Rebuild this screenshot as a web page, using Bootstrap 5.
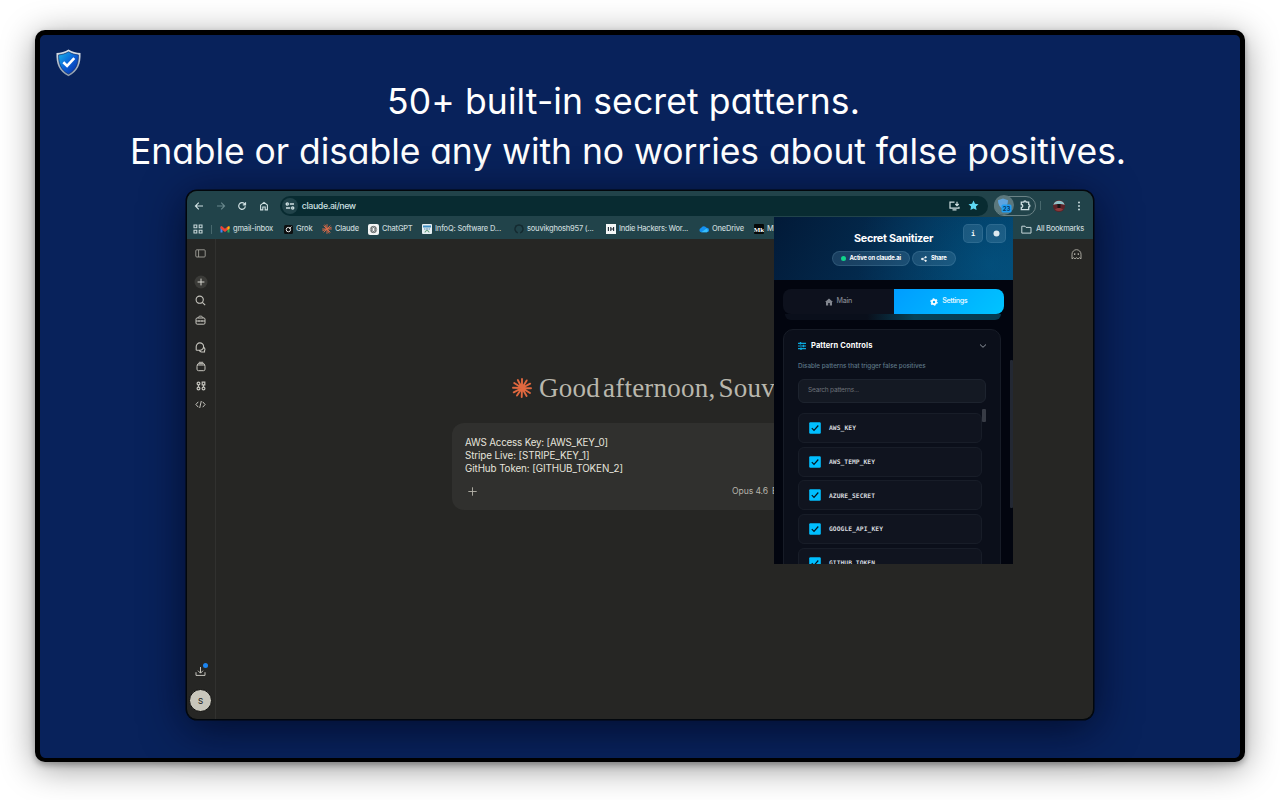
<!DOCTYPE html>
<html lang="en">
  <head>
    <meta charset="UTF-8" />
    <meta name="viewport" content="width=device-width, initial-scale=1.0" />
    <title>Secret Sanitizer</title>
    <link
      href="https://cdn.jsdelivr.net/npm/bootstrap@5.3.3/dist/css/bootstrap.min.css"
      rel="stylesheet"
    />
    <style>
      body {
        background: #fff;
        font-family: Inter, "Liberation Sans", sans-serif;
        width: 1280px;
        height: 800px;
        overflow: hidden;
        padding: 30px 35px;
      }
      svg {
        display: block;
        flex: none;
      }
      .fit {
        display: inline-block;
        white-space: nowrap;
        flex: none;
      }

      /* Slide */
      .slide {
        width: 1210px;
        height: 732px;
        border: 4.500px solid #000;
        border-width: 5px 5px 4px;
        border-radius: 10px;
        background: #08225b;
        padding-top: 14px;
        box-shadow: 0 6px 34px rgba(0, 0, 0, 0.4), 0 3px 6px rgba(0, 0, 0, 0.3);
      }
      .logo {
        margin-left: 15px;
      }
      .headline {
        font-size: 35.5px;
        line-height: 49.5px;
        font-weight: 400;
        font-feature-settings: "cv11";
        color: #fff;
        margin: 0 0 14px;
      }
      .headline .first {
        padding-right: 33px;
      }
      .headline .second {
        padding-right: 24px;
      }

      /* Browser window */
      .browser {
        width: 908px;
        height: 530px;
        margin-left: 146px;
        border: 1px solid #02070c;
        border-radius: 11px;
        background: #262624;
        box-shadow: 0 0 0 0.5px #02070c, 0 8px 44px rgba(2, 6, 28, 0.75);
      }
      .browser-inner {
        height: 100%;
        border-radius: 10px;
        overflow: hidden;
      }
      .toolbar {
        height: 26px;
        background: #21434a;
        color: #cfe0e2;
        padding: 3px 10px 0 7px;
      }
      .nav-icons {
        gap: 11.6px;
      }
      .address {
        width: 708px;
        height: 20px;
        border-radius: 10px;
        background: #082b31;
        margin-left: 11px;
        padding: 0 9px 0 2px;
        font-size: 8.8px;
        font-weight: 500;
      }
      .site-btn {
        width: 16px;
        height: 16px;
        border-radius: 50%;
        background: #21434a;
        margin-right: 4px;
      }
      .ext-pill {
        width: 42px;
        height: 20px;
        border: 1px solid #6b8387;
        border-radius: 10px;
        margin-left: 6px;
        padding-right: 4px;
      }
      .ext-on {
        width: 20px;
        height: 20px;
        margin: -1px 0 0 -1px;
        border-radius: 50%;
        background: #5c787d;
      }
      .vline {
        width: 1px;
        height: 9px;
        background: #48686d;
      }
      .bookmarks {
        height: 22px;
        background: #21434a;
        color: #c6d6d8;
        font-size: 7.5px;
        font-weight: 500;
        padding: 2px 9px 0 6px;
      }
      .bm-list {
        display: grid;
        grid-template-columns: 64px 38px 46px 54px 92px 92px 93px 55px 20px;
        margin-left: 8px;
      }
      .bm-list > div {
        display: flex;
        align-items: center;
        gap: 3px;
      }

      /* Page */
      .page {
        height: 480px;
      }
      .side {
        width: 29px;
        border-right: 1px solid #31312f;
        color: #c5c4bd;
        padding: 5px 0 7px;
      }
      .side .cell {
        width: 27px;
        height: 19px;
        display: flex;
        align-items: center;
        justify-content: center;
      }
      .side .space {
        height: 9px;
      }
      .avatar-s {
        width: 23px;
        height: 23px;
        border-radius: 50%;
        background: #c8c6bb;
        border: 1px solid #0e0e0d;
        color: #262624;
        font-size: 8px;
        font-weight: 500;
        margin-left: 2px;
      }
      .chat {
        padding: 132px 0 0 236px;
      }
      .greeting {
        font-family: "Liberation Serif", serif;
        font-size: 27px;
        line-height: 34px;
        word-spacing: -4px;
        color: #b9b7ad;
        padding-left: 60px;
        gap: 7px;
      }
      .composer {
        width: 404px;
        height: 87px;
        border-radius: 12px;
        background: #30302e;
        margin-top: 18px;
        padding: 12.5px 13px;
        font-size: 9.8px;
        line-height: 13px;
        color: #e6e4dd;
      }
      .composer-foot {
        font-size: 8.6px;
        color: #b5b3aa;
        margin-top: 10px;
        padding-left: 3px;
      }
      .model {
        margin-left: 255px;
      }
      .ghost {
        padding: 10px 11px;
        color: #b5b3aa;
      }

      /* Extension popup, opened over the page */
      .popup {
        top: 26px;
        left: 587px;
        width: 239px;
        height: 347px;
        overflow: hidden;
        background: #02050f;
        color: #fff;
      }
      .popup-head {
        height: 63px;
        background: radial-gradient(circle at 90% 75%, rgba(0, 110, 165, 0.35), transparent 60%),
          linear-gradient(120deg, #021a38 0%, #032c50 50%, #04426a 100%);
        padding-top: 14px;
      }
      .popup-title {
        font-size: 10.8px;
        line-height: 16px;
        font-weight: 700;
      }
      .chip {
        height: 15px;
        border: 1px solid rgba(150, 200, 225, 0.16);
        border-radius: 8px;
        background: rgba(110, 160, 190, 0.22);
        font-size: 5.9px;
        font-weight: 700;
      }
      .chip-live {
        padding: 0 8px;
        margin-right: 2px;
      }
      .live-dot {
        width: 5px;
        height: 5px;
        border-radius: 50%;
        background: #10d48a;
      }
      .head-btns {
        top: 7px;
        right: 7px;
        gap: 3px;
      }
      .head-btn {
        width: 20px;
        height: 19px;
        border: 1px solid rgba(150, 200, 225, 0.14);
        border-radius: 5px;
        background: rgba(110, 160, 190, 0.24);
        font: 700 7px "DejaVu Sans Mono", monospace;
      }
      .tabs {
        width: 221px;
        height: 25px;
        margin: 9px 0 0 9px;
        font-size: 7.1px;
      }
      .tab-main {
        background: #0d111d;
        border-radius: 8px 0 0 8px;
        color: #82868f;
        font-weight: 500;
      }
      .tab-set {
        background: linear-gradient(135deg, #009dff, #00c4ff);
        border-radius: 0 8px 8px 0;
        color: #d9f3ff;
        font-weight: 600;
      }
      .tab-under {
        width: 216px;
        height: 6px;
        margin: 0 0 0 11px;
        border-radius: 0 0 8px 8px;
        background: linear-gradient(90deg, #0a0f1b 38%, #064257 60%, #063a50);
      }
      .panel {
        width: 218px;
        height: 260px;
        margin: 9px 0 0 9px;
        border: 1px solid #171c27;
        border-radius: 10px;
        background: #0b0f1a;
        padding: 9px 0 0 14px;
      }
      .panel-title {
        font-size: 7.5px;
        line-height: 13px;
        font-weight: 700;
        padding-right: 13px;
      }
      .panel-name {
        margin-left: 5px;
      }
      .hint {
        font-size: 6.3px;
        line-height: 10px;
        font-weight: 500;
        color: #5d7686;
        margin-top: 9px;
      }
      .search {
        width: 188px;
        height: 24px;
        border: 1px solid #1d232e;
        border-radius: 6px;
        background: #141923;
        color: #6d7178;
        font-size: 6.6px;
        padding-left: 9px;
        margin-top: 7.5px;
      }
      .rows {
        width: 184px;
        margin-top: 10.5px;
      }
      .rule {
        height: 30px;
        margin-bottom: 3.7px;
        border: 1px solid #181d28;
        border-radius: 6px;
        background: #10141f;
        padding-left: 10px;
        gap: 8px;
        font-family: "DejaVu Sans Mono", monospace;
        font-size: 6.3px;
        font-weight: 700;
        color: #d5d8de;
      }
      .thumb-in {
        top: 192px;
        left: 208px;
        width: 4px;
        height: 13px;
        border-radius: 1px;
        background: #373b45;
      }
      .thumb-out {
        top: 143px;
        right: 0;
        width: 3px;
        height: 148px;
        border-radius: 1px;
        background: #232833;
      }
    </style>
  </head>
  <body>
    <div class="slide">
      <svg class="logo" width="27" height="28" viewBox="0 0 27 28">
        <defs>
          <linearGradient id="shieldFill" x1="0" y1="0" x2="1" y2="1">
            <stop offset="0" stop-color="#19b5ea" />
            <stop offset=".5" stop-color="#0b62d8" />
            <stop offset="1" stop-color="#06259a" />
          </linearGradient>
          <linearGradient id="shieldRim" x1="0" y1="0" x2="0" y2="1">
            <stop offset="0" stop-color="#dfe5ec" />
            <stop offset="1" stop-color="#8a98a8" />
          </linearGradient>
        </defs>
        <path d="M13.500 .5C17 2.900 21 3.700 25.500 4 26 14.500 23.200 22.500 13.500 27.200 3.800 22.500 1 14.500 1.500 4 6 3.700 10 2.900 13.500 .5z" fill="url(#shieldRim)" />
        <path d="M13.500 2.800C17 4.900 20 5.600 23.400 5.900 23.700 14 21.300 21.100 13.500 25 5.700 21.100 3.300 14 3.600 5.900 7 5.600 10 4.900 13.500 2.800z" fill="url(#shieldFill)" stroke="#0a2a6a" stroke-width=".7" />
        <path d="M8.300 13.300l3.800 3.700 7.200-7.800" fill="none" stroke="#fff" stroke-width="2.600" />
      </svg>
      <h1 class="headline text-center">
        <div class="first"><span class="fit" data-w="473">50+ built-in secret patterns.</span></div>
        <div class="second"><span class="fit" data-w="996">Enable or disable any with no worries about false positives.</span></div>
      </h1>

      <div class="browser position-relative">
        <div class="browser-inner">
          <div class="toolbar d-flex align-items-center">
            <div class="nav-icons d-flex">
              <svg width="10" height="10" viewBox="0 0 10 10" fill="none" stroke="currentColor" stroke-width="1.100"><path d="M9 5H1.500M4.800 1.600L1.400 5l3.400 3.400" /></svg>
              <svg width="10" height="10" viewBox="0 0 10 10" fill="none" stroke="#68878c" stroke-width="1.100"><path d="M1 5h7.500M5.200 1.600L8.600 5 5.200 8.400" /></svg>
              <svg width="10" height="10" viewBox="0 0 10 10" fill="none" stroke="currentColor" stroke-width="1.200"><path d="M8.300 5.200A3.300 3.300 0 1 1 7.400 2.700L8.300 3.700M8.500 1.200v2.700H5.800" /></svg>
              <svg width="10" height="10" viewBox="0 0 10 10" fill="none" stroke="currentColor" stroke-width="1.100"><path d="M1.600 4.100L5 1.400l3.400 2.700v4.800H6.200V6H3.800v2.900H1.600z" /></svg>
            </div>
            <div class="address d-flex align-items-center">
              <div class="site-btn d-flex align-items-center justify-content-center">
                <svg width="10" height="10" viewBox="0 0 10 10" fill="none" stroke="currentColor" stroke-width="1.300"><circle cx="2.300" cy="3" r="1.100" /><path d="M4.800 3H9M1 7h4.200" /><circle cx="7.700" cy="7" r="1.100" /></svg>
              </div>
              <span class="fit" data-w="54">claude.ai/new</span>
              <svg class="ms-auto" width="11" height="10" viewBox="0 0 11 10" fill="none" stroke="currentColor" stroke-width="1.200"><path d="M5.500 1.200H1v6h9V5.800M3.500 8.800h4M8 .8v3.600M6.300 3L8 4.700 9.700 3" /></svg>
              <svg class="ms-2" width="11" height="11" viewBox="0 0 11 11" fill="#5fd8f4"><path d="M5.500.6l1.500 3.200 3.500.4-2.600 2.400.7 3.500-3.100-1.700-3.100 1.700.7-3.500L.5 4.200 4 3.800z" /></svg>
            </div>
            <div class="ext-pill d-flex align-items-center justify-content-between">
              <div class="ext-on d-flex align-items-center justify-content-center">
                <svg width="16" height="16" viewBox="0 0 16 16">
                  <path d="M7 1.500l5 1.800c0 4-1.500 7-5 8.700-3.500-1.700-5-4.700-5-8.700z" fill="#5ea4df" />
                  <rect x="5.500" y="7.500" width="10" height="8" rx="1.500" fill="#1f9df2" />
                  <text x="10.500" y="13.700" font-size="6" font-weight="700" text-anchor="middle" fill="#063a66">23</text>
                </svg>
              </div>
              <svg width="11" height="11" viewBox="0 0 11 11" fill="none" stroke="currentColor" stroke-width="1.300"><path d="M1.300 2.200h2.500a1.200 1.200 0 0 1 2.400 0h2.500v2.400a1.200 1.200 0 0 1 0 2.400v2.700H1.300V7.500a1.400 1.400 0 0 0 0-3z" /></svg>
            </div>
            <div class="vline ms-1 me-2"></div>
            <svg class="ms-1" width="12" height="12" viewBox="0 0 12 12"><circle cx="6" cy="6" r="6" fill="#5d2328" /><path d="M.3 5A6 6 0 0 1 11.700 5C9 3.800 3 3.800.3 5z" fill="#8fc0c6" /><path d="M4.500 4h3v4h-3z" fill="#1b1416" /><path d="M2 9.500c2-2 6-2 8 0A6 6 0 0 1 2 9.500z" fill="#8e3a3c" /></svg>
            <svg class="ms-auto me-0" width="8" height="10" viewBox="0 0 8 10" fill="currentColor"><circle cx="4" cy="1.500" r=".95" /><circle cx="4" cy="5" r=".95" /><circle cx="4" cy="8.500" r=".95" /></svg>
          </div>

          <div class="bookmarks d-flex align-items-center">
            <svg width="10" height="10" viewBox="0 0 10 10" fill="none" stroke="currentColor" stroke-width="1.100"><path d="M1 1h2.800v2.800H1zM6.200 1H9v2.800H6.200zM1 6.200h2.800V9H1zM6.200 6.200H9V9H6.200z" /></svg>
            <div class="vline ms-2"></div>
            <div class="bm-list">
              <div>
                <svg width="10" height="9" viewBox="0 0 10 9"><path d="M.5 1.500v6h2V4z" fill="#4285f4" /><path d="M9.500 1.500v6h-2V4z" fill="#34a853" /><path d="M.5 3.500v-2l1.200-.4L5 3.700l3.300-2.600 1.200.4v2L5 7z" fill="#ea4335" /><path d="M7.500 2v3l2-1.600V1.200z" fill="#fbbc04" /></svg>
                <span class="fit" data-w="40">gmail-inbox</span>
              </div>
              <div>
                <svg width="9" height="9" viewBox="0 0 9 9"><rect width="9" height="9" rx="1.500" fill="#0c0f10" /><circle cx="4.400" cy="4.600" r="2.200" fill="none" stroke="#e8e8e8" stroke-width="1" /><path d="M5.300 3.700L7.500 1.500" stroke="#e8e8e8" stroke-width=".9" /></svg>
                <span class="fit" data-w="16.5">Grok</span>
              </div>
              <div>
                <svg width="10" height="10" viewBox="-5 -5 10 10" stroke="#d96a48" stroke-width=".95"><path d="M0-4.800V4.800M-4.800 0H4.800M-3.400-3.400L3.400 3.400M3.400-3.400L-3.400 3.400M-2.200-4.400L2.200 4.400M4.600-1.800L-4.600 1.800" /></svg>
                <span class="fit" data-w="24">Claude</span>
              </div>
              <div>
                <svg width="11" height="11" viewBox="0 0 11 11"><rect width="11" height="11" rx="2" fill="#f3f5f5" /><g fill="none" stroke="#5b6263" stroke-width=".7"><circle cx="5.500" cy="5.500" r="3.200" /><ellipse cx="5.500" cy="5.500" rx="1.500" ry="3.200" transform="rotate(30 5.500 5.500)" /><ellipse cx="5.500" cy="5.500" rx="1.500" ry="3.200" transform="rotate(-30 5.500 5.500)" /></g></svg>
                <span class="fit" data-w="30.5">ChatGPT</span>
              </div>
              <div>
                <svg width="10" height="10" viewBox="0 0 10 10"><rect width="10" height="10" rx="1" fill="#e6eef2" /><path d="M1 1.500h8v2H1z" fill="#3f8fc4" /><path d="M3 8.500a2 2 0 1 1 4 0" fill="none" stroke="#5b9a76" /><path d="M5 4v2M2 5h1.500M6.500 5H8" stroke="#2b6f9f" stroke-width=".8" /></svg>
                <span class="fit" data-w="66">InfoQ: Software D...</span>
              </div>
              <div>
                <svg width="10" height="10" viewBox="0 0 10 10" fill="none" stroke="#142a30" stroke-width="1.400"><path d="M3.800 8.800A4 4 0 1 1 6.200 8.800M2 1.200v2M8 1.200v2" /></svg>
                <span class="fit" data-w="66.5">souvikghosh957 (...</span>
              </div>
              <div>
                <svg width="10" height="10" viewBox="0 0 10 10"><rect width="10" height="10" fill="#f4f6f6" /><path d="M2.400 3v4M4.800 3v4M7.600 3v4M4.800 5h2.800" stroke="#1f2b36" stroke-width="1.100" /></svg>
                <span class="fit" data-w="69">Indie Hackers: Wor...</span>
              </div>
              <div>
                <svg width="10" height="8" viewBox="0 0 10 8"><path d="M2.300 7.300a2.200 2.200 0 0 1-.2-4.300A3 3 0 0 1 7.500 2.700a2.300 2.300 0 0 1 .4 4.600z" fill="#1490f0" /><path d="M2.300 7.300L7.500 3.600a2.100 2.100 0 0 1 .4 3.700z" fill="#38c0fb" /></svg>
                <span class="fit" data-w="32">OneDrive</span>
              </div>
              <div>
                <svg width="10" height="10" viewBox="0 0 10 10"><rect width="10" height="10" rx="1" fill="#050808" /><text x="5" y="7.500" font-family="Liberation Serif" font-size="7" font-weight="700" text-anchor="middle" fill="#fff">Mk</text></svg>
                <span>M</span>
              </div>
            </div>
            <svg class="ms-auto me-1" width="11" height="9" viewBox="0 0 11 9" fill="none" stroke="currentColor"><path d="M.8 1.200h3.200l1 1.200h5v5.700H.8z" stroke-linejoin="round" /></svg>
            <span class="fit" data-w="48">All Bookmarks</span>
          </div>

          <div class="page d-flex">
            <div class="side d-flex flex-column">
              <div class="cell"><svg width="11" height="9" viewBox="0 0 11 9" fill="none" stroke="#a3a29b" stroke-width=".9"><rect x=".8" y=".8" width="9.400" height="7.200" rx="1" /><path d="M3.600 1v7" /></svg></div>
              <div class="space"></div>
              <div class="cell"><svg width="14" height="14" viewBox="0 0 14 14"><circle cx="7" cy="7" r="6.500" fill="#3b3b38" /><path d="M7 3.600v6.800M3.600 7h6.800" stroke="#d6d5ce" /></svg></div>
              <div class="cell"><svg width="11" height="11" viewBox="0 0 11 11" fill="none" stroke="currentColor" stroke-width="1.100"><circle cx="4.700" cy="4.700" r="3.600" /><path d="M7.300 7.300L10.200 10.200" /></svg></div>
              <div class="cell"><svg width="11" height="10" viewBox="0 0 11 10" fill="none" stroke="currentColor"><rect x="1" y="3" width="9" height="6.200" rx="1.200" /><path d="M3 3c0-2.500 5-2.500 5 0M1 6h9M4 5.200v1.600M7 5.200v1.600" /></svg></div>
              <div class="space"></div>
              <div class="cell"><svg width="11" height="11" viewBox="0 0 11 11" fill="none" stroke="currentColor" stroke-width="1.100"><path d="M1.200 8.200V4.700a3.700 3.700 0 1 1 3.700 3.600H1.200M8.600 5.200c1.700 1 1.500 2.800.9 3.400v1.400H6.500c-1 0-1.800-.6-2.200-1.700" /></svg></div>
              <div class="cell"><svg width="10" height="11" viewBox="0 0 10 11" fill="none" stroke="currentColor"><rect x="1" y="4" width="8" height="5.700" rx="1.500" /><path d="M1 4.500L2 2.700h6l1 1.800M2.800 1.300h4.400" /></svg></div>
              <div class="cell"><svg width="10" height="10" viewBox="0 0 10 10" fill="none" stroke="currentColor" stroke-width="1.200"><circle cx="2.500" cy="2.500" r="1.400" /><path d="M6.200 1.200h2.600v2.600H6.200zM2.500 4v2M7.500 4v2" /><circle cx="2.500" cy="7.500" r="1.400" /><circle cx="7.500" cy="7.500" r="1.400" /></svg></div>
              <div class="cell"><svg width="11" height="9" viewBox="0 0 11 9" fill="none" stroke="currentColor"><path d="M3.300 1.800L.9 4.500l2.400 2.700M7.700 1.800l2.400 2.700-2.400 2.700M6.300 1L4.700 8" /></svg></div>
              <div class="cell mt-auto mb-2 pb-1"><svg width="15" height="14" viewBox="0 0 15 14" fill="none" stroke="currentColor"><path d="M7.500 4v6M5 7.700l2.500 2.500L10 7.700M3 9.200v3.200h9V9.200" /><circle cx="12.500" cy="2.600" r="2.500" fill="#1b84f0" stroke="none" /></svg></div>
              <div class="avatar-s d-flex align-items-center justify-content-center">S</div>
            </div>

            <div class="chat">
              <div class="greeting d-flex align-items-center">
                <svg width="20" height="20" viewBox="-10 -10 20 20" stroke="#e0683f" stroke-width="1.900" stroke-linecap="round"><path d="M0 0V-9M0 0L4.700-7.600M0 0L8.200-4.300M0 0L9 .3M0 0L8 5M0 0L4.600 8M0 0L-.3 9M0 0L-5 7.600M0 0L-8.300 4.300M0 0L-9-.3M0 0L-7.800-5M0 0L-4.200-8" /></svg>
                <span class="fit" data-w="236">Good afternoon, Souv</span>
              </div>
              <div class="composer">
                <div><span class="fit" data-w="143">AWS Access Key: [AWS_KEY_0]</span></div>
                <div><span class="fit" data-w="124.5">Stripe Live: [STRIPE_KEY_1]</span></div>
                <div><span class="fit" data-w="158">GitHub Token: [GITHUB_TOKEN_2]</span></div>
                <div class="composer-foot d-flex align-items-center">
                  <svg width="9" height="9" viewBox="0 0 9 9" stroke="currentColor" stroke-width=".9"><path d="M4.500.3v8.400M.3 4.500h8.400" /></svg>
                  <span class="fit model" data-w="36">Opus 4.6</span>
                  <span class="ms-1">Extended</span>
                </div>
              </div>
            </div>
            <div class="ghost ms-auto">
              <svg width="11" height="11" viewBox="0 0 11 11" fill="none" stroke="currentColor" stroke-width=".9"><path d="M1 9.800V5.200a4.500 4.500 0 0 1 9 0v4.600L8.500 8.700 7 9.800 5.500 8.700 4 9.800 2.500 8.700z" /><path d="M3.700 4.300v1.600M7.300 4.300v1.600" stroke-width="1.200" /></svg>
            </div>
          </div>
        </div>

        <div class="popup position-absolute">
          <div class="popup-head">
            <div class="popup-title text-center"><span class="fit" data-w="79">Secret Sanitizer</span></div>
            <div class="d-flex justify-content-center mt-1">
              <div class="chip chip-live d-flex align-items-center">
                <div class="live-dot me-1"></div>
                <span class="fit" data-w="51.5">Active on claude.ai</span>
              </div>
              <div class="chip d-flex align-items-center px-2">
                <svg class="me-1" width="6" height="6" viewBox="0 0 6 6" fill="#fff" stroke="#fff" stroke-width=".7"><circle cx="1.200" cy="3" r=".8" /><circle cx="4.700" cy="1.200" r=".7" /><circle cx="4.700" cy="4.800" r=".7" /><path d="M4.700 1.200L1.200 3l3.500 1.800" fill="none" /></svg>
                <span class="fit" data-w="15.500">Share</span>
              </div>
            </div>
            <div class="head-btns position-absolute d-flex">
              <div class="head-btn d-flex align-items-center justify-content-center">i</div>
              <div class="head-btn d-flex align-items-center justify-content-center">
                <svg width="7" height="7" viewBox="0 0 7 7"><circle cx="3.500" cy="3.500" r="3" fill="#dfeaf0" /></svg>
              </div>
            </div>
          </div>

          <div class="tabs d-flex">
            <div class="tab-main w-50 d-flex align-items-center justify-content-center">
              <svg class="me-1" width="8" height="8" viewBox="0 0 8 8" fill="currentColor"><path d="M4 .5L0 4h1v3.500h2.200V5h1.600v2.500H7V4h1z" /></svg>
              <span class="fit" data-w="15.500">Main</span>
            </div>
            <div class="tab-set w-50 d-flex align-items-center justify-content-center">
              <svg class="me-1" width="8" height="8" viewBox="-4 -4 8 8" fill="none" stroke="#fff"><circle r="2.100" stroke-width="1.700" /><circle r="3.200" stroke-width="1.100" stroke-dasharray="1.670 1.680" /></svg>
              <span class="fit" data-w="25">Settings</span>
            </div>
          </div>
          <div class="tab-under"></div>

          <div class="panel">
            <div class="panel-title d-flex align-items-center">
              <svg width="8" height="8" viewBox="0 0 8 8" stroke="#0aa7dc" stroke-width="1.200"><path d="M0 1.300h8M0 4h8M0 6.700h8" /><path d="M2.500 0v2.600M5.500 2.700v2.600M3 5.400V8" stroke-width="1.400" /></svg>
              <span class="fit panel-name" data-w="61.500">Pattern Controls</span>
              <svg class="ms-auto" width="8" height="6" viewBox="0 0 8 6" fill="none" stroke="#8f959e" stroke-width="1"><path d="M1 1.500l3 2.800 3-2.800" /></svg>
            </div>
            <div class="hint"><span class="fit" data-w="127.500">Disable patterns that trigger false positives</span></div>
            <div class="search d-flex align-items-center"><span class="fit" data-w="51">Search patterns...</span></div>
            <div class="rows" id="rows"></div>
          </div>
          <div class="thumb-in position-absolute"></div>
          <div class="thumb-out position-absolute"></div>
        </div>
      </div>
    </div>

    <script src="https://cdn.jsdelivr.net/npm/bootstrap@5.3.3/dist/js/bootstrap.bundle.min.js"></script>
    <script>
      const rows = document.getElementById("rows");
      const patterns = [
        ["AWS_KEY", 27],
        ["AWS_TEMP_KEY", 46],
        ["AZURE_SECRET", 46],
        ["GOOGLE_API_KEY", 54],
        ["GITHUB_TOKEN", 46],
      ];

      patterns.forEach(([name, width]) => {
        const row = document.createElement("div");
        row.className = "rule d-flex align-items-center";
        row.innerHTML = `
          <svg width="12" height="12" viewBox="0 0 12 12">
            <rect x=".2" y=".2" width="11.600" height="11.600" rx="1.200" fill="#00bfff" />
            <path d="M2.800 6.200l2.200 2.200 4.300-4.900" fill="none" stroke="#04141f" stroke-width="1.200" />
          </svg>
          <span class="fit" data-w="${width}">${name}</span>`;
        rows.appendChild(row);
      });

      // Track each label so that it fills its own width
      document.querySelectorAll(".fit").forEach((el) => {
        const natural = el.getBoundingClientRect().width;
        const gap = (Number(el.dataset.w) - natural) / el.textContent.length;
        el.style.letterSpacing = gap + "px";
      });
    </script>
  </body>
</html>
